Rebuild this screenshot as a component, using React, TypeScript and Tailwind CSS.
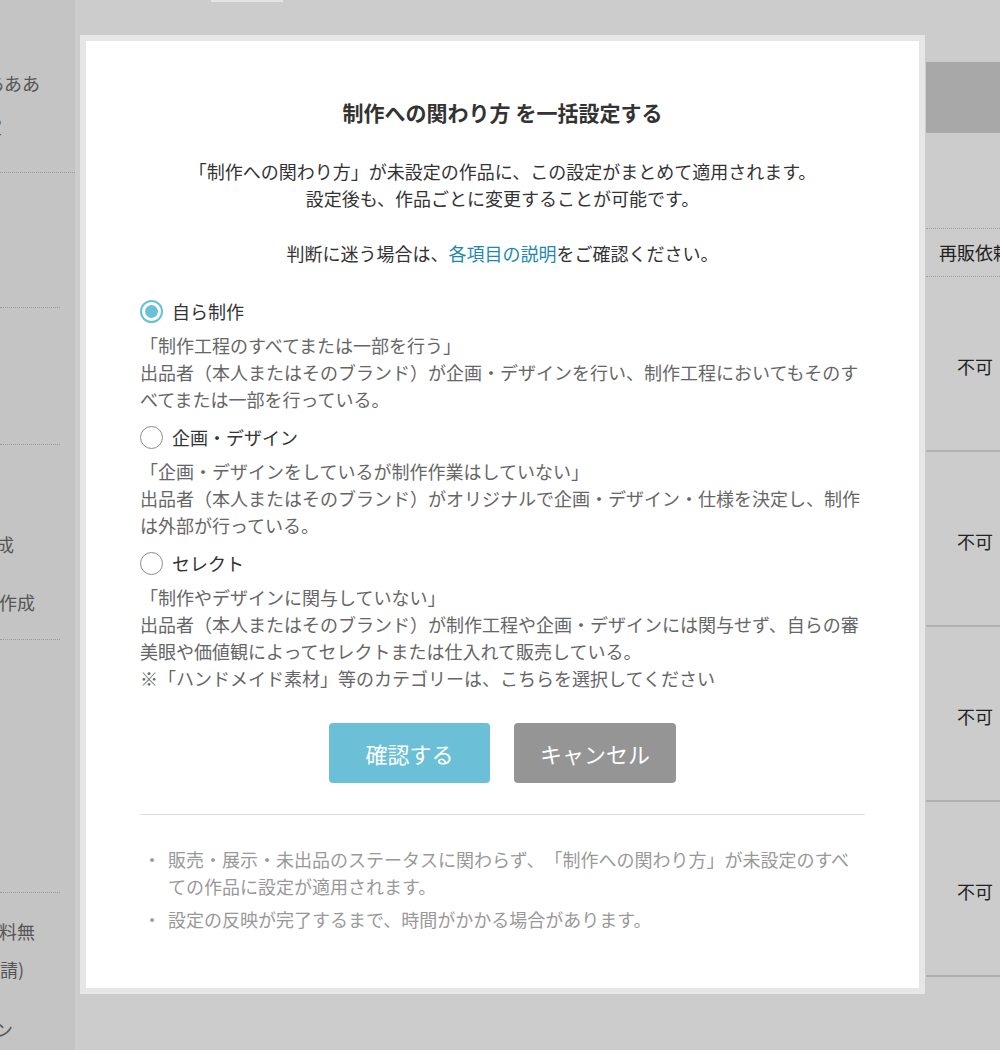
import React from 'react';

type Option = {
  label: string;
  lines: string[];
};

const OPTIONS: Option[] = [
  {
    label: '自ら制作',
    lines: [
      '「制作工程のすべてまたは一部を行う」',
      '出品者（本人またはそのブランド）が企画・デザインを行い、制作工程においてもそのすべてまたは一部を行っている。',
    ],
  },
  {
    label: '企画・デザイン',
    lines: [
      '「企画・デザインをしているが制作作業はしていない」',
      '出品者（本人またはそのブランド）がオリジナルで企画・デザイン・仕様を決定し、制作は外部が行っている。',
    ],
  },
  {
    label: 'セレクト',
    lines: [
      '「制作やデザインに関与していない」',
      '出品者（本人またはそのブランド）が制作工程や企画・デザインには関与せず、自らの審美眼や価値観によってセレクトまたは仕入れて販売している。',
      '※「ハンドメイド素材」等のカテゴリーは、こちらを選択してください',
    ],
  },
];

const NOTES = [
  '販売・展示・未出品のステータスに関わらず、「制作への関わり方」が未設定のすべての作品に設定が適用されます。',
  '設定の反映が完了するまで、時間がかかる場合があります。',
];

const Radio = ({ checked }: { checked: boolean }) =>
  checked ? (
    <span className="flex h-[23px] w-[23px] shrink-0 items-center justify-center rounded-full border-2 border-[#6bc0d8]">
      <span className="h-[13px] w-[13px] rounded-full bg-[#6bc0d8]" />
    </span>
  ) : (
    <span className="h-[23px] w-[23px] shrink-0 rounded-full border-[1.5px] border-[#8c8c8c]" />
  );

// clipped text in the narrow left column; overflow runs off to the left
const Clip = ({ text, w, className = '' }: { text: string; w: string; className?: string }) => (
  <div className={`flex justify-end ${w} ${className}`}>
    <span className="whitespace-nowrap">{text}</span>
  </div>
);

const SideColumn = () => (
  <aside className="w-[75px] shrink-0 overflow-hidden bg-[#c4c4c4] text-[18px] leading-[27px] text-[#555]">
    <div className="h-[173px] border-b border-dotted border-[#9a9a9a] pt-[70px]">
      <Clip text="ああああ" w="w-[40px]" />
      <Clip text="設定" w="w-[2px]" className="mt-[16px]" />
    </div>
    <div className="h-[135px] w-[60px] border-b border-dotted border-[#9a9a9a]" />
    <div className="h-[137px] w-[60px] border-b border-dotted border-[#9a9a9a]" />
    <div className="h-[195px] w-[60px] border-b border-dotted border-[#9a9a9a] pt-[86px]">
      <Clip text="作成" w="w-[14px]" />
      <Clip text="下書作成" w="w-[35px]" className="mt-[31px]" />
    </div>
    <div className="h-[253px] w-[60px] border-b border-dotted border-[#9a9a9a]" />
    <div className="pt-[25px]">
      <Clip text="送料無" w="w-[35px]" />
      <Clip text="（要申請)" w="w-[24px]" className="mt-[11px]" />
      <Clip text="オプション" w="w-[13px]" className="mt-[33px]" />
    </div>
  </aside>
);

const RightColumn = () => (
  <div className="w-[98px] shrink-0 text-[18px] leading-[27px] text-[#222]">
    <div className="h-[62px]" />
    <div className="h-[71px] bg-[#a8a8a8]" />
    <div className="h-[96px] border-b border-dotted border-[#a0a0a0]" />
    <div className="flex h-[48px] items-center justify-center whitespace-nowrap border-b border-dotted border-[#a0a0a0]">
      再販依頼
    </div>
    {[0, 1, 2, 3].map((i) => (
      <div key={i} className="flex h-[175px] items-center justify-center border-b-2 border-[#b0b0b0] pt-[5px]">
        不可
      </div>
    ))}
  </div>
);

const BulkSettingModal = () => (
  <div className="absolute left-[80px] top-[35px] w-[845px] border-[6px] border-[#e6e6e6] bg-white px-[54px] pb-[55px] pt-[56px]">
    <h2 className="text-center text-[21px] font-bold leading-[30px] text-[#333]">
      制作への関わり方 を一括設定する
    </h2>
    <p className="mt-[31px] text-center text-[18px] leading-[27px] text-[#333]">
      「制作への関わり方」が未設定の作品に、この設定がまとめて適用されます。
      <br />
      設定後も、作品ごとに変更することが可能です。
    </p>
    <p className="mt-[28px] text-center text-[18px] leading-[27px] text-[#333]">
      判断に迷う場合は、<a className="text-[#1f88b0]">各項目の説明</a>をご確認ください。
    </p>

    <div className="mt-[29px] flex flex-col gap-[9px]">
      {OPTIONS.map((opt, i) => (
        <div key={opt.label}>
          <label className="flex h-[30px] items-center gap-[9px] text-[18px] text-[#333]">
            <Radio checked={i === 0} />
            {opt.label}
          </label>
          <div className="mt-[6px] text-[18px] leading-[27px] text-[#666]">
            {opt.lines.map((line) => (
              <p key={line}>{line}</p>
            ))}
          </div>
        </div>
      ))}
    </div>

    <div className="mt-[31px] flex justify-center gap-[24px]">
      <button className="h-[60px] w-[161px] rounded-[4px] bg-[#6bc0d8] text-[22px] text-white">
        確認する
      </button>
      <button className="h-[60px] w-[162px] rounded-[4px] bg-[#959595] text-[22px] text-white">
        キャンセル
      </button>
    </div>

    <hr className="mt-[31px] border-t border-[#dcdcdc]" />

    <ul className="mt-[31px] flex flex-col gap-[6px] text-[18px] leading-[27px] text-[#999]">
      {NOTES.map((note) => (
        <li key={note} className="flex">
          <span className="w-[28px] shrink-0 pl-[3px]">・</span>
          <span>{note}</span>
        </li>
      ))}
    </ul>
  </div>
);

export default function App() {
  return (
    <div className="relative h-[1050px] overflow-hidden bg-[#cccccc] font-['Noto_Sans_CJK_JP',sans-serif] [text-spacing-trim:space-all]">
      <div className="flex h-full">
        <SideColumn />
        <main className="flex flex-1 overflow-hidden">
          <div className="flex-1">
            <div className="ml-[136px] h-[2px] w-[72px] bg-[#e4e4e4]" />
          </div>
          <div className="w-[74px] overflow-hidden">
            <RightColumn />
          </div>
        </main>
      </div>
      <BulkSettingModal />
    </div>
  );
}
